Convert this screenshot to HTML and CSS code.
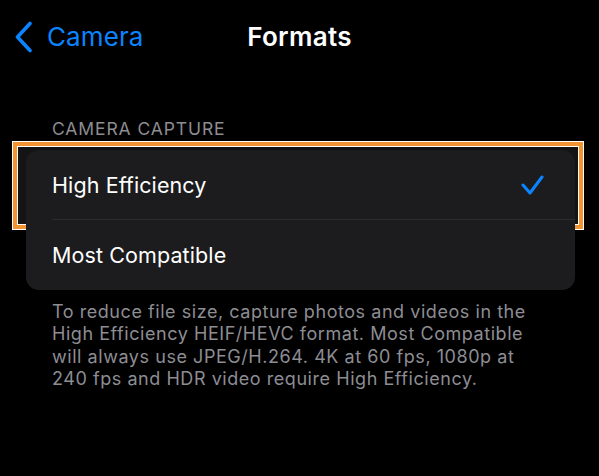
FILE: index.html
```html
<!DOCTYPE html>
<html lang="en">
<head>
<meta charset="utf-8">
<title>Formats</title>
<link rel="stylesheet" href="styles.css">
</head>
<body>
<header class="nav">
  <a class="back" href="#">
    <svg class="chev" width="20" height="32" viewBox="0 0 20 32"><polyline points="16,2.5 3.5,16 16,29.5" fill="none" stroke="#0a84ff" stroke-width="3.6" stroke-linecap="round" stroke-linejoin="round"/></svg>
    <span>Camera</span>
  </a>
  <h1 class="title">Formats</h1>
  <div></div>
</header>
<main class="content">
  <div class="group-header">CAMERA CAPTURE</div>
  <div class="card">
    <div class="row selected">
      <div class="frame"></div>
      <span class="label">High Efficiency</span>
      <svg class="check" width="24" height="22" viewBox="0 0 24 22"><polyline points="2,11 9,19 21,3" fill="none" stroke="#0a84ff" stroke-width="3" stroke-linecap="round" stroke-linejoin="round"/></svg>
    </div>
    <div class="row">
      <span class="label">Most Compatible</span>
    </div>
  </div>
  <p class="footer">To reduce file size, capture photos and videos in the High Efficiency HEIF/HEVC format. Most Compatible will always use JPEG/H.264. 4K at 60 fps, 1080p at 240 fps and HDR video require High Efficiency.</p>
</main>
</body>
</html>
```
FILE: styles.css
```css
html {
  background: #000;
}
body {
  margin: 0;
  font-family: Inter, "Noto Sans", sans-serif;
  color: #fff;
  width: 599px;
  height: 476px;
  overflow: hidden;
}
.nav {
  height: 73px;
  display: grid;
  grid-template-columns: 1fr auto 1fr;
  align-items: center;
}
.back {
  display: flex;
  align-items: center;
  gap: 13px;
  padding-left: 14px;
  color: #0a84ff;
  text-decoration: none;
  font-size: 26px;
  letter-spacing: 0.1px;
}
.chev {
  display: block;
}
.title {
  margin: 0;
  font-size: 26px;
  font-weight: 600;
  letter-spacing: 0.3px;
}
.content {
  padding: 0 24px 0 26px;
}
.group-header {
  padding: 46px 0 11px 26px;
  font-size: 17.5px;
  line-height: 20px;
  color: #8d8d93;
  letter-spacing: 0.9px;
}
.card {
  position: relative;
  background: #1c1c1e;
  border-radius: 13px;
}
.row {
  position: relative;
  height: 70px;
  display: flex;
  align-items: center;
  justify-content: space-between;
  padding: 0 30px 0 26px;
}
.row + .row::before {
  content: "";
  position: absolute;
  left: 26px;
  right: 0;
  top: -1px;
  height: 1px;
  background: #2c2c2e;
}
.label {
  font-size: 21.5px;
  letter-spacing: 0.1px;
}
.check {
  display: block;
}
.frame {
  position: absolute;
  z-index: -1;
  left: -14px;
  right: -9px;
  top: -9px;
  bottom: -10px;
  background: #141414;
  border: 1px solid #fff;
  box-shadow: inset 0 0 0 4px #f29431, inset 0 0 0 5px #fff;
}
.footer {
  margin: 11px 0 0 26px;
  width: 484px;
  font-size: 18px;
  line-height: 22.3px;
  color: #8d8d93;
  letter-spacing: 0.55px;
}
```
